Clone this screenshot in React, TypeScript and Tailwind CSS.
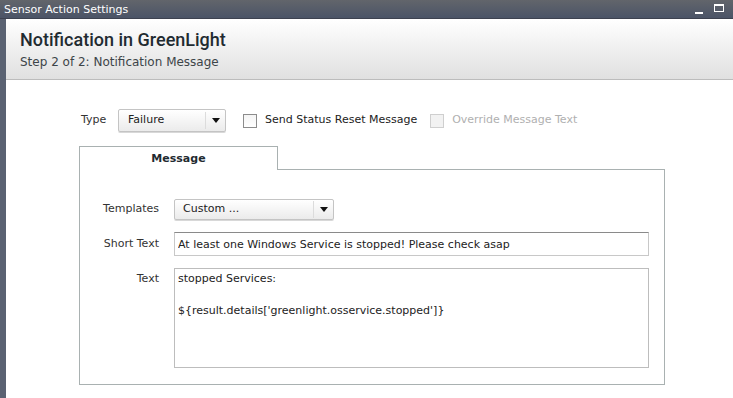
function Arrow() {
  return (
    <svg width="8" height="5" viewBox="0 0 8 5" className="block">
      <path d="M0 0h8L4 5z" fill="#111" />
    </svg>
  )
}

function Select({ value, width, height, sepAt }: { value: string; width: string; height: string; sepAt: string }) {
  return (
    <div
      className={`${width} ${height} flex items-center border border-[#c4c4c4] rounded-[2px] bg-linear-to-b from-white to-[#ebebeb] shadow-[0_1px_0_#d8d8d8]`}
    >
      <span className={`${sepAt} text-[#222]`}>{value}</span>
      <span className="w-px h-[17px] bg-[#dcdcdc]" />
      <span className="flex-1 flex justify-center">
        <Arrow />
      </span>
    </div>
  )
}

function Checkbox({ disabled }: { disabled?: boolean }) {
  return (
    <span
      className={
        disabled
          ? "block size-[14px] border border-[#cfcfcf] bg-[#f2f2f2]"
          : "block size-[14px] border border-[#8c8c8c] bg-linear-to-b from-[#f4f4f4] to-white"
      }
    />
  )
}

export default function App() {
  return (
    <div
      className="w-[733px] h-[398px] overflow-hidden flex flex-col bg-white text-[11px] text-[#333]"
      style={{ fontFamily: '"DejaVu Sans", Verdana, sans-serif' }}
    >
      {/* window title bar */}
      <div className="h-[19px] shrink-0 flex items-center justify-between pl-[4px] pr-[9px] bg-linear-to-b from-[#62656b] to-[#4b5467] border-b border-[#3d4250]">
        <span className="text-white leading-none">Sensor Action Settings</span>
        <div className="flex items-start gap-[11px] h-[10px]">
          <span className="mt-[8px] block w-[8px] h-[2px] bg-white" />
          <span className="block w-[10px] h-[8px] border border-white border-t-2" />
        </div>
      </div>

      <div className="flex-1 flex">
        <div className="w-[6px] shrink-0 bg-[#5a6272]" />

        <div className="flex-1 flex flex-col">
          {/* header */}
          <div className="h-[61px] shrink-0 pl-[14px] pt-[10px] bg-linear-to-b from-white to-[#e0e0e0] border-b border-[#bcbcbc]">
            <div
              className="text-[18px] leading-[22px] font-medium text-[#1f2b31]"
              style={{ fontFamily: "Roboto, sans-serif" }}
            >
              Notification in GreenLight
            </div>
            <div className="mt-[4px] text-[12px] leading-[14px] text-[#3c4448]">Step 2 of 2: Notification Message</div>
          </div>

          {/* options row */}
          <div className="pt-[29px] pl-[75px] flex items-center">
            <span className="w-[37px]">Type</span>
            <Select value="Failure" width="w-[108px]" height="h-[23px]" sepAt="w-[86px] pl-[9px]" />
            <span className="ml-[17px]">
              <Checkbox />
            </span>
            <span className="ml-[8px] text-[#222]">Send Status Reset Message</span>
            <span className="ml-[13px]">
              <Checkbox disabled />
            </span>
            <span className="ml-[8px] text-[#b0b0b0]">Override Message Text</span>
          </div>

          {/* tab panel */}
          <div className="mt-[14px] ml-[73px] w-[586px] flex flex-col">
            <div className="flex h-[24px]">
              <div className="w-[199px] border border-b-0 border-[#a9b1b1] flex items-center justify-center pt-[1px] font-bold text-[#1f2b31]">
                Message
              </div>
              <div className="flex-1 border-b border-[#a9b1b1]" />
            </div>
            <div className="h-[215px] border border-t-0 border-[#a9b1b1] pt-[29px] pr-[15px] grid grid-cols-[79px_1fr] gap-x-[15px] content-start">
              <span className="self-center text-right">Templates</span>
              <Select value="Custom ..." width="w-[160px]" height="h-[21px]" sepAt="w-[138px] pl-[8px]" />

              <span className="mt-[12px] self-center text-right">Short Text</span>
              <input
                readOnly
                value="At least one Windows Service is stopped! Please check asap"
                className="mt-[12px] h-[24px] px-[3px] border border-[#c8c8c8] border-t-[#8a8a8a] text-[#222] outline-none"
              />

              <span className="mt-[12px] pt-[3px] text-right">Text</span>
              <textarea
                readOnly
                value={"stopped Services:\n\n${result.details['greenlight.osservice.stopped']}"}
                className="mt-[12px] h-[100px] px-[3px] pt-[2px] leading-[16px] border border-[#bdbdbd] text-[#222] resize-none outline-none"
              />
            </div>
          </div>
        </div>
      </div>
    </div>
  )
}
